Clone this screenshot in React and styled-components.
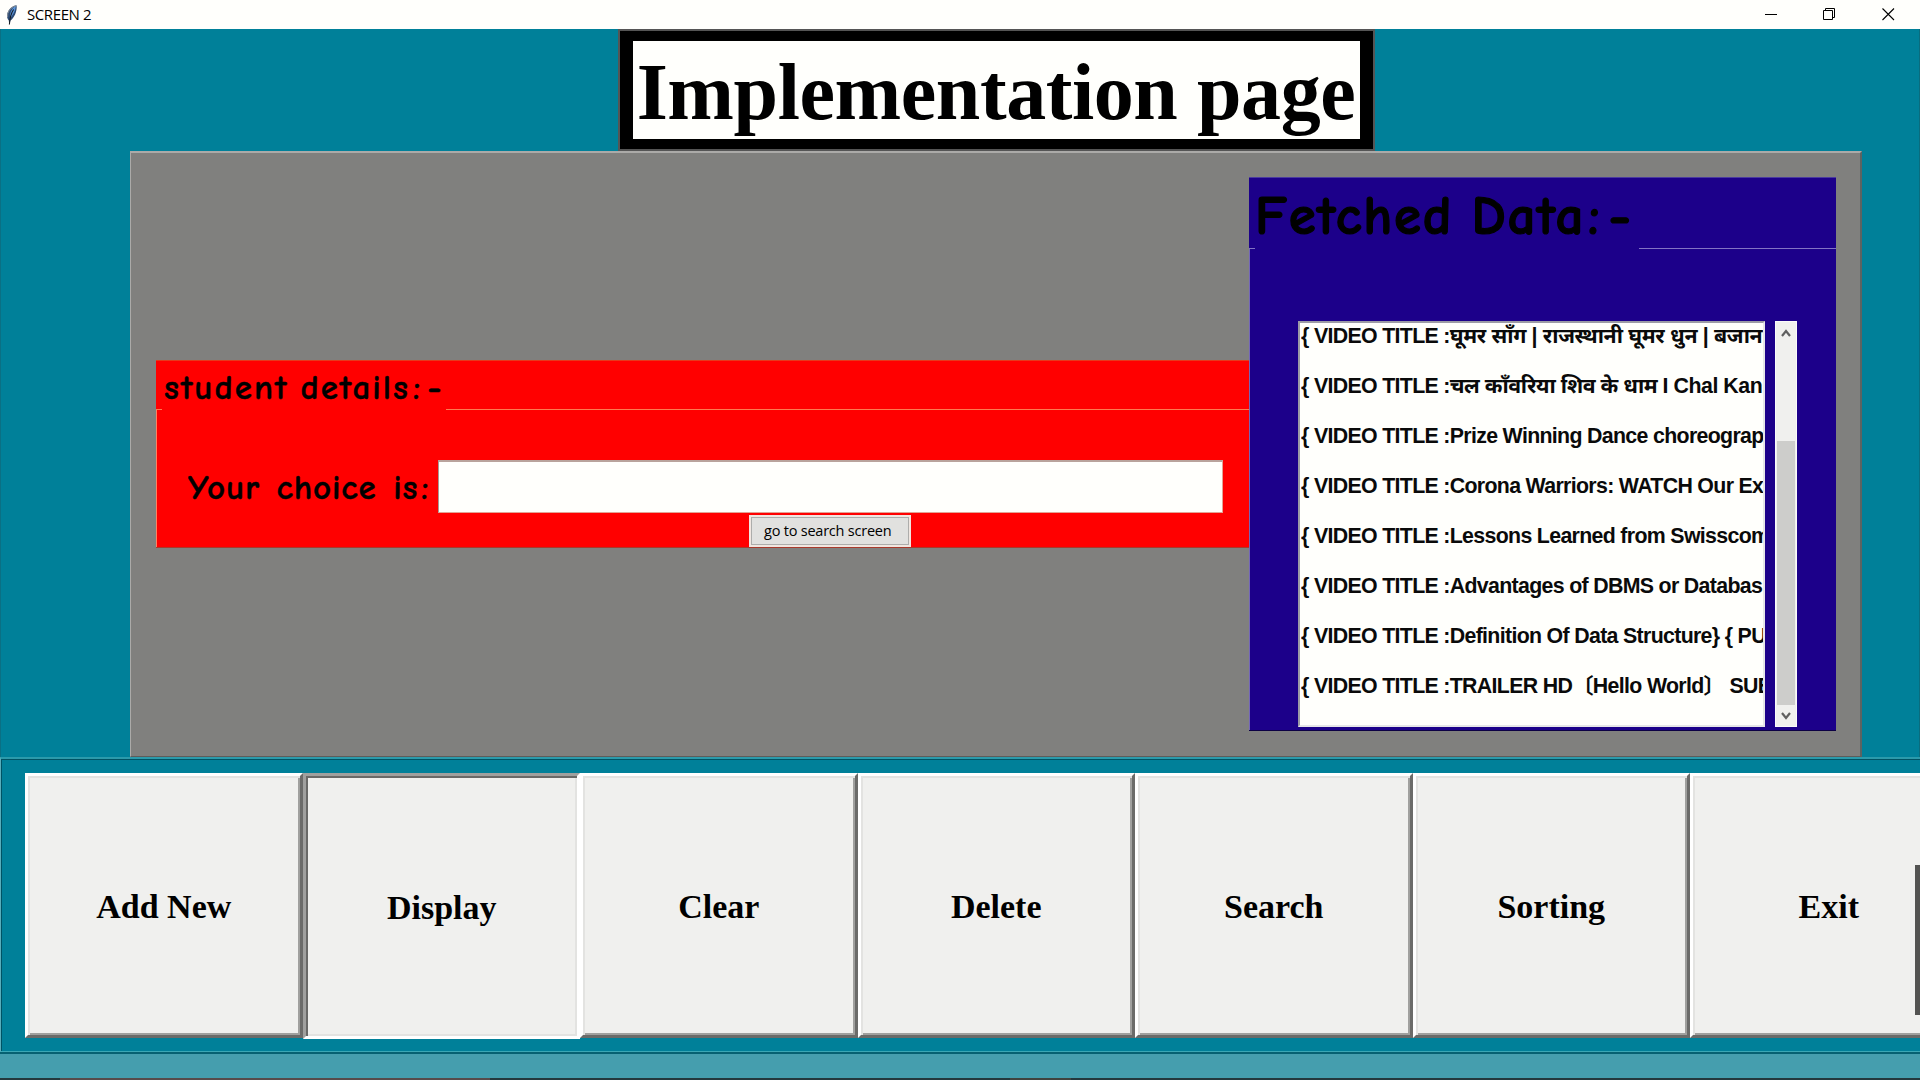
import React from "react";
import styled, { createGlobalStyle, css } from "styled-components";

const Global = createGlobalStyle`
  * { box-sizing: border-box; }
  body { margin: 0; background: #008099; overflow: hidden; }
`;

const Window = styled.div`
  width: 1920px;
  height: 1080px;
  display: flex;
  flex-direction: column;
  overflow: hidden;
  background: #008099;
  color: #000;
  position: relative;
`;

const TitleBar = styled.header`
  height: 29px;
  flex: none;
  background: #fffffc;
  display: flex;
  align-items: center;
  padding: 0 25px 0 6px;
  font: 15px/29px "Open Sans", "Noto Sans", sans-serif;
`;

const TitleText = styled.span`
  margin-left: 9px;
  flex: 1;
  letter-spacing: -0.4px;
  height: 29px;
  line-height: 29px;
`;

const Controls = styled.div`
  display: flex;
  gap: 46px;
  svg { display: block; }
  svg:first-child { margin-right: -1px; }
`;

const Client = styled.main`
  height: 728px;
  flex: none;
  display: flex;
  flex-direction: column;
  align-items: center;
  padding-left: 72px;
  border-left: 1px solid #0a7084;
  border-right: 1px solid #0a6c7e;
`;

const Heading = styled.h1`
  margin: 0;
  width: 757px;
  height: 122px;
  flex: none;
  background: #000;
  border: 2px solid #555;
  padding: 10px 13px;
  display: flex;
`;

const HeadingText = styled.span`
  flex: 1;
  background: #fffffc;
  white-space: nowrap;
  text-align: center;
  font: bold 80px/102px "Liberation Serif", "Times New Roman", serif;
  letter-spacing: -0.42px;
`;

const Panel = styled.section`
  width: 1732px;
  height: 606px;
  flex: none;
  background: #80807e;
  border: 1px solid #abaaa8;
  border-top-width: 2px;
  border-right: 2px solid #5d6362;
  border-bottom: 1px solid #5d5d5b;
  display: flex;
  align-items: flex-start;
  padding: 24px 0 0 25px;
`;

const comic = css`
  font-family: "Comic Sans MS", "Comic Neue", "Open Sans", sans-serif;
  font-weight: 600;
  white-space: pre;
`;

const LabelFrame = styled.section`
  width: ${(p) => p.$w}px;
  height: ${(p) => p.$h}px;
  margin-top: ${(p) => p.$top || 0}px;
  flex: none;
  background: ${(p) => p.$bg};
  border-top: 1px solid ${(p) => p.$edge};
  border-bottom: 1px solid ${(p) => p.$shade};
  display: flex;
  flex-direction: column;
`;

const Legend = styled.div`
  ${comic}
  height: ${(p) => p.$h}px;
  flex: none;
  display: flex;
  align-items: flex-end;
  font-size: ${(p) => p.$size}px;
  line-height: ${(p) => p.$lh}px;
  letter-spacing: ${(p) => p.$track}px;
  word-spacing: ${(p) => p.$word}px;
  -webkit-text-stroke: ${(p) => p.$stroke}px #000;
`;

const Stub = styled.i`
  width: 6px;
  height: 1px;
  background: ${(p) => p.$c};
`;

const Caption = styled.span`
  width: ${(p) => p.$w}px;
  padding-left: ${(p) => p.$pad}px;
  flex: none;
`;

const Wide = styled.span`
  margin-left: 3px;
  letter-spacing: ${(p) => p.$track}px;
`;

const Rule = styled.i`
  flex: 1;
  height: 1px;
  background: ${(p) => p.$c};
`;

const FrameBody = styled.div`
  flex: 1;
  min-height: 0;
  border-left: 1px solid ${(p) => p.$c};
  display: flex;
  flex-direction: column;
`;

const Field = styled.label`
  ${comic}
  display: flex;
  margin: 50px 0 0 31px;
  height: 53px;
  font-size: 35px;
  line-height: 56px;
  letter-spacing: 0.8px;
  word-spacing: 3.5px;
  -webkit-text-stroke: 0.4px #000;
`;

const FieldName = styled.span`
  width: 250px;
  flex: none;
`;

const Entry = styled.span`
  width: 785px;
  height: 53px;
  background: #fffffc;
  border: 1px solid #e3a394;
  border-top: 2px solid #b9a39c;
  border-left: 1px solid #a59b97;
`;

const GoButton = styled.button`
  margin: 2px 0 0 592px;
  width: 162px;
  height: 32px;
  padding: 0 0 0 13px;
  border: 2px solid #f0e6e0;
  background: #e1e1df;
  box-shadow: inset 0 0 0 1px #adadab;
  font: 14.5px/28px "Open Sans", "Noto Sans", sans-serif;
  letter-spacing: -0.22px;
  text-align: left;
  white-space: nowrap;
`;

const ListRow = styled.div`
  display: flex;
  gap: 10px;
  margin: 72px 0 0 48px;
`;

const List = styled.div`
  width: 467px;
  height: 406px;
  border: 2px solid #e6e6e8;
  border-top-color: #9c9ba6;
  border-left-color: #9c9ba6;
  background: #fffffc;
  overflow: hidden;
  padding: 0 0 0 1px;
`;

const Line = styled.div`
  height: 50px;
  margin-top: ${(p) => (p.$first ? -12 : 0)}px;
  line-height: 50px;
  font-family: "Liberation Sans", Arial, "Noto Sans Devanagari", "Noto Sans CJK SC", sans-serif;
  font-weight: bold;
  font-size: 21.33px;
  letter-spacing: -0.67px;
  white-space: pre;
  overflow: hidden;
  color: #0a0a0a;
`;

const Name = styled.span`
  letter-spacing: ${(p) => p.$track}px;
`;

const Scroll = styled.div`
  width: 22px;
  height: 406px;
  background: #f0f0ee;
  border: 1px solid #fafafa;
  display: flex;
  flex-direction: column;
  justify-content: space-between;
  svg { display: block; }
`;

const Thumb = styled.div`
  margin: 97px 1px 0;
  height: 264px;
  background: #cdcdcb;
`;

const Toolbar = styled.nav`
  height: 295px;
  flex: none;
  display: flex;
  align-items: flex-start;
  border-top: 2px solid #2b9aab;
  border-bottom: 1px solid #3ba7b5;
  border-left: 1px solid #58aebb;
  box-shadow: inset 1px 1px 0 #005364;
  padding: 14px 0 0 24px;
`;

const ToolButton = styled.button`
  width: 277.5px;
  height: ${(p) => (p.$down ? 266 : 265)}px;
  flex: none;
  background: #f0f0ee;
  padding: ${(p) => (p.$down ? "4px 0 0 1px" : "3px 0 0")};
  border: 3px solid;
  border-color: ${(p) => (p.$down ? "#a0a09e #fff #fff #a0a09e" : "#fff #6b6b69 #6b6b69 #fff")};
  box-shadow: ${(p) =>
    p.$down
      ? "inset 2px 2px 0 #696967, inset -2px -2px 0 #e3e3e1"
      : "inset 2px 2px 0 #e3e3e1, inset -2px -2px 0 #a0a09e"};
  font: bold 34px/40px "Liberation Serif", "Times New Roman", serif;
  color: #000;
`;

const Status = styled.footer`
  height: 26px;
  flex: none;
  background: #459eae;
  border-top: 2px solid #066172;
`;

const Taskbar = styled.div`
  height: 2px;
  flex: none;
  display: flex;
  background: #24383d;
`;

const Task = styled.i`
  margin-left: ${(p) => p.$gap}px;
  width: ${(p) => p.$w}px;
  background: ${(p) => p.$c};
`;

const EdgeHandle = styled.div`
  position: absolute;
  right: 0;
  top: 865px;
  width: 5px;
  height: 150px;
  background: #535351;
`;

const Feather = () => (
  <svg width="12" height="20" viewBox="0 0 12 20">
    <path d="M10.6 0.3 C7 0.5 2.4 4 1.2 9 C0.7 11.5 1.4 14 2.8 15.6 L3.2 19.5 L4.5 15.6 C8 13 11.3 7 10.6 0.3Z" fill="#2b4a74" />
    <path d="M9.8 1 C7 2 4.8 5.5 4 10 L4 13.6 C6 11 9.8 6 9.8 1Z" fill="#5b96dc" />
    <path d="M10 0.8 C6.5 1.4 3 4.5 1.8 8.5 L1.6 12" stroke="#8c9299" strokeWidth="1" fill="none" />
    <path d="M7.6 4.5 C5.4 7.6 3.9 12 3.4 19.5" stroke="#161b22" strokeWidth="1.1" fill="none" />
  </svg>
);

const lines = [
  { name: "घूमर सॉंग | राजस्थानी घूमर धुन | बजान", track: -0.33 },
  { name: "चल काँवरिया शिव के धाम I Chal Kan", track: -0.47 },
  { name: "Prize Winning Dance choreograp", track: -0.67 },
  { name: "Corona Warriors: WATCH Our Ex", track: -0.67 },
  { name: "Lessons Learned from Swisscom", track: -0.67 },
  { name: "Advantages of DBMS or Databas", track: -0.67 },
  { name: "Definition Of Data Structure} { PU", track: -0.67 },
  { name: "TRAILER HD〔Hello World〕 SUB", track: -0.67 },
];

const tools = ["Add New", "Display", "Clear", "Delete", "Search", "Sorting", "Exit"];

export default function App() {
  return (
    <Window>
      <Global />
      <TitleBar>
        <Feather />
        <TitleText>SCREEN 2</TitleText>
        <Controls>
          <svg width="13" height="13"><path d="M0 6.5H12" stroke="#000" /></svg>
          <svg width="13" height="13"><path d="M.5 2.5h9v9h-9zM2.5 2.5v-2h9v9h-2" stroke="#000" fill="none" /></svg>
          <svg width="13" height="13"><path d="M.5 .5L12 12M12 .5L.5 12" stroke="#000" strokeWidth="1.1" /></svg>
        </Controls>
      </TitleBar>
      <Client>
        <Heading><HeadingText>Implementation page</HeadingText></Heading>
        <Panel>
          <LabelFrame $w={1093} $h={188} $top={183} $bg="#ff0000" $edge="#e63a1c" $shade="#a83a2c">
            <Legend $h={49} $size={35} $lh={45} $track={2} $word={-2.5} $stroke={0.4}>
              <Stub $c="#ff7a50" />
              <Caption $w={284} $pad={2}>student details<Wide $track={7}>:-</Wide></Caption>
              <Rule $c="#ff7a50" />
            </Legend>
            <FrameBody $c="#ff8060">
              <Field><FieldName>Your choice is<Wide $track={0}>:</Wide></FieldName><Entry /></Field>
              <GoButton>go to search screen</GoButton>
            </FrameBody>
          </LabelFrame>
          <LabelFrame $w={587} $h={554} $bg="#1c008a" $edge="#4a3aa0" $shade="#0c0044">
            <Legend $h={71} $size={55} $lh={65} $track={1.7} $word={-3} $stroke={1.2}>
              <Stub $c="#8273c4" />
              <Caption $w={384} $pad={0}>Fetched Data<Wide $track={9}>:-</Wide></Caption>
              <Rule $c="#8273c4" />
            </Legend>
            <FrameBody $c="#7466b8">
              <ListRow>
                <List>
                  {lines.map((l, i) => (
                    <Line key={l.name} $first={i === 0}>
                      {"{ VIDEO TITLE :"}<Name $track={l.track}>{l.name}</Name>
                    </Line>
                  ))}
                </List>
                <Scroll>
                  <svg width="20" height="22"><path d="M6 14l4-5 4 5" stroke="#606060" strokeWidth="2.2" fill="none" /></svg>
                  <Thumb />
                  <svg width="20" height="21"><path d="M6 8l4 5 4-5" stroke="#606060" strokeWidth="2.2" fill="none" /></svg>
                </Scroll>
              </ListRow>
            </FrameBody>
          </LabelFrame>
        </Panel>
      </Client>
      <Toolbar>
        {tools.map((t) => (
          <ToolButton key={t} $down={t === "Display"}>{t}</ToolButton>
        ))}
      </Toolbar>
      <Status />
      <Taskbar>
        <Task $gap={60} $w={430} $c="#574b4b" />
        <Task $gap={520} $w={61} $c="#40433f" />
      </Taskbar>
      <EdgeHandle />
    </Window>
  );
}
